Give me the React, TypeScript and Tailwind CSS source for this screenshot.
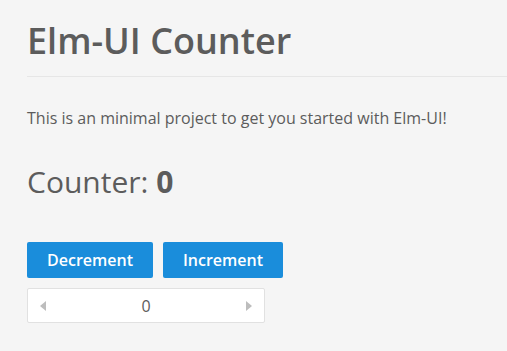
import { useState } from "react";

export default function App() {
  const [count, setCount] = useState(0);

  return (
    <div className="min-h-screen bg-[#f5f5f5] text-[#5c5c5c] font-['Open_Sans',sans-serif]">
      <div className="pl-[27px] pt-[16px]">
        <h1 className="text-[36px] font-semibold leading-[49px] pb-[11px] border-b border-[#e6e6e6]">
          Elm-UI Counter
        </h1>
        <p className="mt-[29px] text-[16px] leading-[24px]">
          This is an minimal project to get you started with Elm-UI!
        </p>
        <div className="mt-[32px] text-[30px] leading-[40px]">
          Counter: <span className="font-bold">{count}</span>
        </div>
        <div className="mt-[40px] flex gap-[10px]">
          <button
            onClick={() => setCount(count - 1)}
            className="h-[36px] w-[126px] rounded-[2px] bg-[#1a8ddb] text-[16px] font-semibold text-white"
          >
            Decrement
          </button>
          <button
            onClick={() => setCount(count + 1)}
            className="h-[36px] w-[120px] rounded-[2px] bg-[#1a8ddb] text-[16px] font-semibold text-white"
          >
            Increment
          </button>
        </div>
        <div className="mt-[10px] flex h-[35px] w-[238px] items-center rounded-[2px] border border-[#e1e1e1] bg-white">
          <button onClick={() => setCount(count - 1)} className="flex w-[30px] justify-center text-[#bdbdbd]">
            <svg width="6" height="10" viewBox="0 0 6 10">
              <path d="M6 0L0 5l6 5z" fill="currentColor" />
            </svg>
          </button>
          <div className="flex-1 text-center text-[16px]">{count}</div>
          <button onClick={() => setCount(count + 1)} className="flex w-[30px] justify-center text-[#bdbdbd]">
            <svg width="6" height="10" viewBox="0 0 6 10">
              <path d="M0 0l6 5-6 5z" fill="currentColor" />
            </svg>
          </button>
        </div>
      </div>
    </div>
  );
}
